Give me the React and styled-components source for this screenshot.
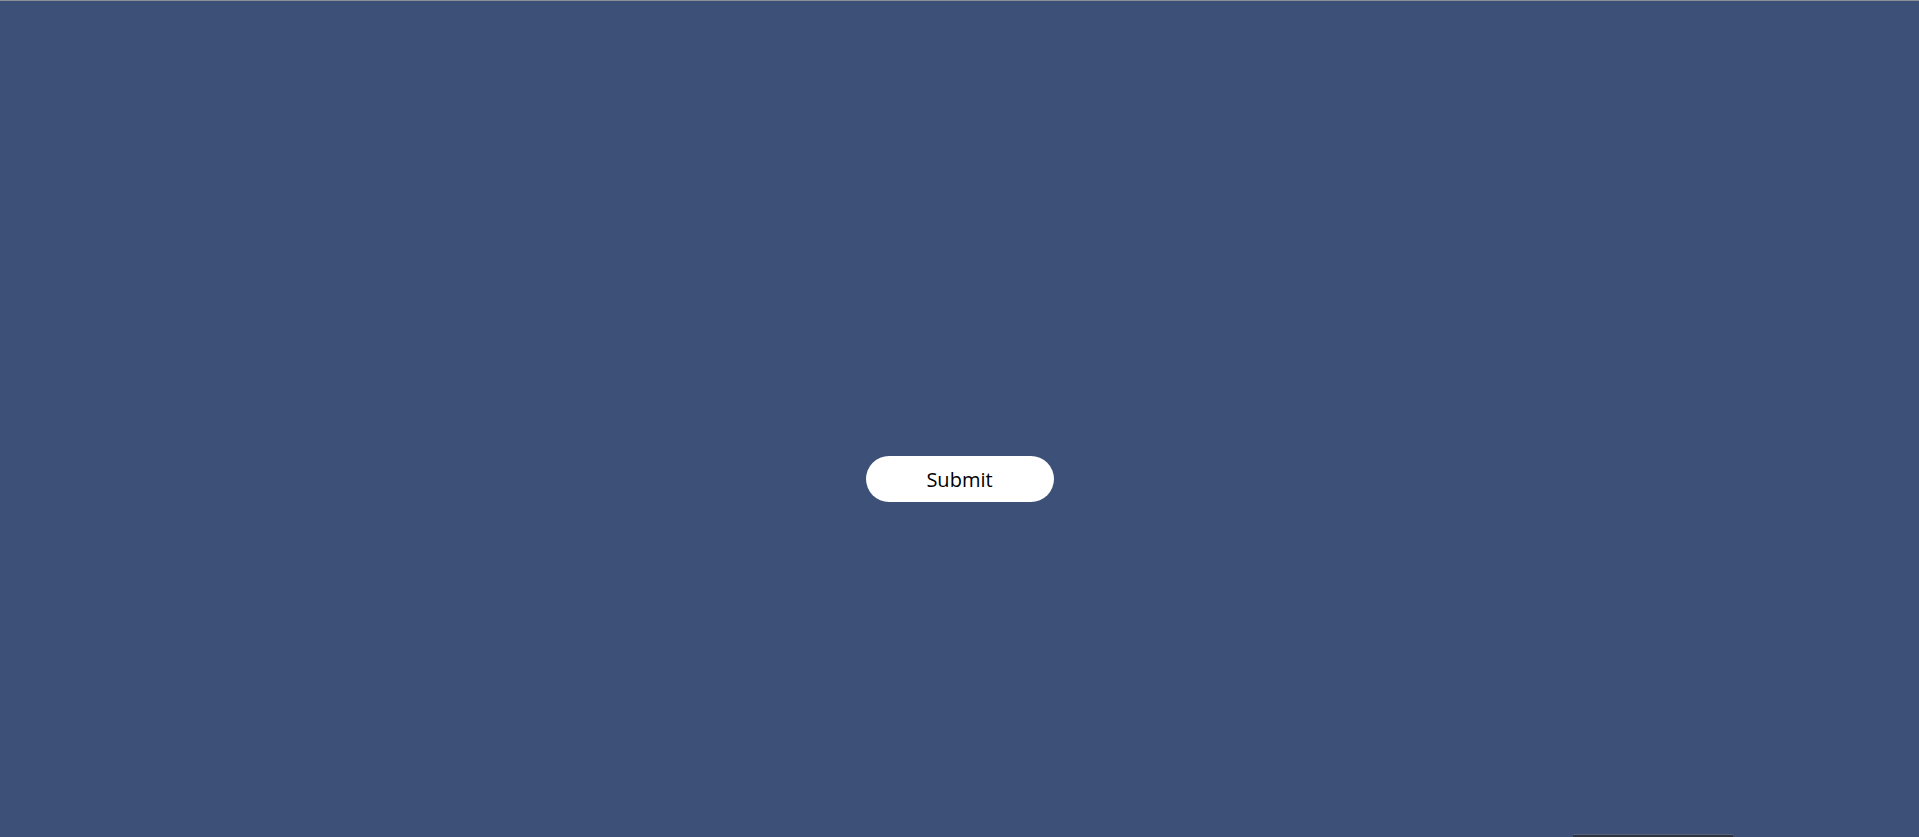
import React from 'react'
import styled, { createGlobalStyle } from 'styled-components'

const GlobalStyle = createGlobalStyle`
  html, body {
    margin: 0;
    padding: 0;
    background: #3c5078;
    overflow: hidden;
  }
`

const Page = styled.div`
  height: 837px;
  display: flex;
  flex-direction: column;
  border-top: 1px solid #8a8f98;
  box-sizing: border-box;
`

const Main = styled.main`
  flex: 1;
  display: flex;
  justify-content: center;
  align-items: flex-start;
  padding-top: 455px;
`

const SubmitButton = styled.button`
  width: 188px;
  height: 46px;
  border: none;
  border-radius: 23px;
  background: #ffffff;
  color: #000000;
  font-family: "Open Sans", "Liberation Sans", sans-serif;
  font-size: 20px;
  cursor: pointer;
`

const Footer = styled.div`
  display: flex;
  justify-content: flex-end;
  padding-right: 186px;
`

const FooterBar = styled.div`
  width: 160px;
  height: 2px;
  background: #2f3540;
  border-top: 1px solid #56607a;
`

const App = () => {
  return (
    <>
      <GlobalStyle />
      <Page>
        <Main>
          <SubmitButton type="button">Submit</SubmitButton>
        </Main>
        <Footer>
          <FooterBar />
        </Footer>
      </Page>
    </>
  )
}

export default App
